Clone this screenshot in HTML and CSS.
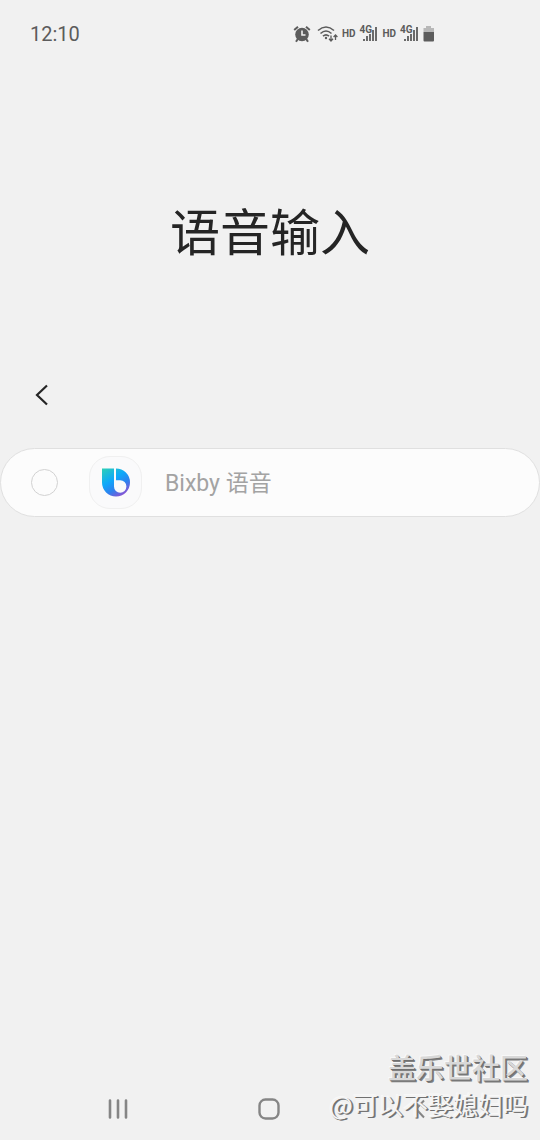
FILE: index.html
```html
<!DOCTYPE html>
<html lang="zh-CN">
<head>
<meta charset="utf-8">
<meta name="viewport" content="width=device-width, initial-scale=1">
<title>语音输入</title>
<link rel="stylesheet" href="styles.css">
</head>
<body>
<div class="screen">
  <div class="status">
    <time class="clock">12:10</time>
    <div class="indicators">
      <svg width="18" height="18" viewBox="0 0 18 18" aria-hidden="true">
        <circle cx="9" cy="9.5" r="6.8" fill="#5c5c5c"/>
        <path d="M1.200 5L5 1.700M16.800 5L13 1.700M4.800 14L3 16.800M13.200 14L15 16.800" stroke="#5c5c5c" stroke-width="2" fill="none"/>
        <path d="M9 5.500V10H12.500" stroke="#f1f1f1" stroke-width="1.600" fill="none"/>
      </svg>
      <svg class="wifi" width="21" height="18" viewBox="0 0 21 18" fill="none" stroke="#5c5c5c" stroke-width="1.600" aria-hidden="true">
        <path d="M1 5.500Q9 -1.500 17 5.500M3.500 8.500Q9 3.500 14.500 8.500M6 11.200Q9 8.600 12 11.200"/>
        <circle cx="9" cy="13" r="1.200" fill="#5c5c5c" stroke="none"/>
        <path d="M14 10.500V16M12 13.800L14 16L16 13.800M18.500 15V10M16.600 12L18.500 10L20.400 12" stroke-width="1.300"/>
      </svg>
      <span class="hd">HD</span>
      <span class="signal">
        <svg width="19" height="18" viewBox="0 0 19 18" aria-hidden="true"><path d="M4 14h2v2H4zM7 11h2v5H7zM10 9h2v7h-2zM13 5h2v11h-2zM16 2h2v14h-2z" fill="#6a6a6a"/></svg>
        <span class="network">4G</span>
      </span>
      <span class="hd">HD</span>
      <span class="signal">
        <svg width="19" height="18" viewBox="0 0 19 18" aria-hidden="true"><path d="M4 14h2v2H4zM7 11h2v5H7zM10 9h2v7h-2zM13 5h2v11h-2zM16 2h2v14h-2z" fill="#6a6a6a"/></svg>
        <span class="network">4G</span>
      </span>
      <svg class="battery" width="12" height="18" viewBox="0 0 12 18" aria-hidden="true"><path d="M3 1h5v2h3v4H.500V3H3z" fill="#b8b8b8"/><path d="M.500 7H11v8.500q0 1-1 1H1.500q-1 0-1-1z" fill="#5c5c5c"/></svg>
    </div>
  </div>
  <header class="heading"><h1>语音输入</h1></header>
  <div class="toolbar">
    <button class="back" type="button" aria-label="返回">
      <svg width="16" height="24" viewBox="0 0 16 24" aria-hidden="true"><path d="M13 2.500L3 12l10 9.500" fill="none" stroke="#252525" stroke-width="2.200"/></svg>
    </button>
  </div>
  <main class="content">
    <label class="option">
      <input class="radio" type="radio" name="voice">
      <span class="app-icon">
        <svg width="28" height="29" viewBox="0 0 28 29" aria-hidden="true">
          <defs><linearGradient id="bixby" x1="0" y1="0" x2=".65" y2="1"><stop offset="0" stop-color="#2dd0b5"/><stop offset=".45" stop-color="#0ea8fa"/><stop offset=".72" stop-color="#2d82ee"/><stop offset="1" stop-color="#8755d4"/></linearGradient></defs>
          <path d="M0 .5H12V18.500A6.200 6.200 0 1 0 18.200 12.300H14V.5A14 14 0 1 1 0 14.500Z" fill="url(#bixby)"/>
        </svg>
      </span>
      <span class="name">Bixby 语音</span>
    </label>
  </main>
  <nav class="nav">
    <button type="button" aria-label="最近">
      <svg width="22" height="22" viewBox="0 0 22 22" aria-hidden="true"><path d="M3 2.500v17M11 2.500v17M19 2.500v17" stroke="#858585" stroke-width="2.600" stroke-linecap="round"/></svg>
    </button>
    <button type="button" aria-label="主页">
      <svg width="22" height="22" viewBox="0 0 22 22" aria-hidden="true"><rect x="1.500" y="1.500" width="19" height="19" rx="6" fill="none" stroke="#858585" stroke-width="2.400"/></svg>
    </button>
    <button type="button" aria-label="返回">
      <svg width="22" height="22" viewBox="0 0 22 22" aria-hidden="true"><path d="M15 2.500L7 11l8 8.500" fill="none" stroke="#858585" stroke-width="2"/></svg>
    </button>
  </nav>
  <div class="watermark">
    <div class="community">盖乐世社区</div>
    <div class="author">@可以不娶媳妇吗</div>
  </div>
</div>
</body>
</html>
```
FILE: styles.css
```css
* { box-sizing: border-box; }
body {
  margin: 0;
  background: #f1f1f1;
  color: #252525;
  font-family: Roboto, "Noto Sans CJK SC", sans-serif;
}
button {
  border: 0;
  padding: 0;
  background: none;
  display: flex;
  align-items: center;
  justify-content: center;
}
.screen {
  position: relative;
  min-height: 100vh;
  display: flex;
  flex-direction: column;
}
.status {
  height: 68px;
  padding: 0 105px 0 30px;
  display: flex;
  align-items: center;
  justify-content: space-between;
  color: #5c5c5c;
}
.clock { font-size: 20px; line-height: 24px; }
.indicators { display: flex; align-items: center; }
.wifi { margin: 0 4px 0 6px; }
.hd { font-size: 10px; line-height: 18px; font-weight: 700; }
.signal { position: relative; display: flex; margin: 0 4px; }
.network {
  position: absolute;
  top: 0;
  left: 0;
  font-size: 10px;
  line-height: 10px;
  font-weight: 700;
}
.heading {
  height: 327px;
  padding-top: 4px;
  display: flex;
  align-items: center;
  justify-content: center;
}
h1 {
  margin: 0;
  font-size: 50px;
  line-height: 72px;
  font-weight: 400;
}
.toolbar { height: 53px; padding-left: 32px; }
.back { width: 20px; height: 24px; margin-top: -12px; }
.option {
  height: 69px;
  padding: 0 30px;
  display: flex;
  align-items: center;
  background: #fcfcfc;
  border: 1px solid #e0e0e0;
  border-radius: 35px;
}
.radio {
  appearance: none;
  width: 27px;
  height: 27px;
  margin: 0;
  border: 1px solid #d2d2d2;
  border-radius: 50%;
}
.app-icon {
  width: 53px;
  height: 53px;
  margin: 0 23px 0 31px;
  border: 1px solid #f0f0f0;
  border-radius: 21px;
  background: #fafafb;
  display: flex;
  align-items: center;
  justify-content: center;
}
.name { padding-top: 2px; font-size: 23px; line-height: 32px; color: #a3a3a3; }
.content { flex: 1; }
.nav {
  height: 62px;
  padding: 0 44px 0 42px;
  display: grid;
  grid-template-columns: repeat(3, 1fr);
}
.watermark {
  position: absolute;
  right: 12px;
  bottom: 18px;
  text-align: right;
  font-family: "Noto Sans CJK SC", sans-serif;
  pointer-events: none;
}
.community {
  font-size: 28px;
  line-height: 38px;
  font-weight: 500;
  color: #d8d8d8;
  text-shadow: 1px 1px #707070, 2px 2px #808080, -1px -1px #f8f8f8;
}
.author {
  font-size: 25px;
  line-height: 36px;
  color: #f4f4f4;
  text-shadow: 1px 1px #707070, 2px 1px #808080, -1px -1px #f8f8f8;
}
```
